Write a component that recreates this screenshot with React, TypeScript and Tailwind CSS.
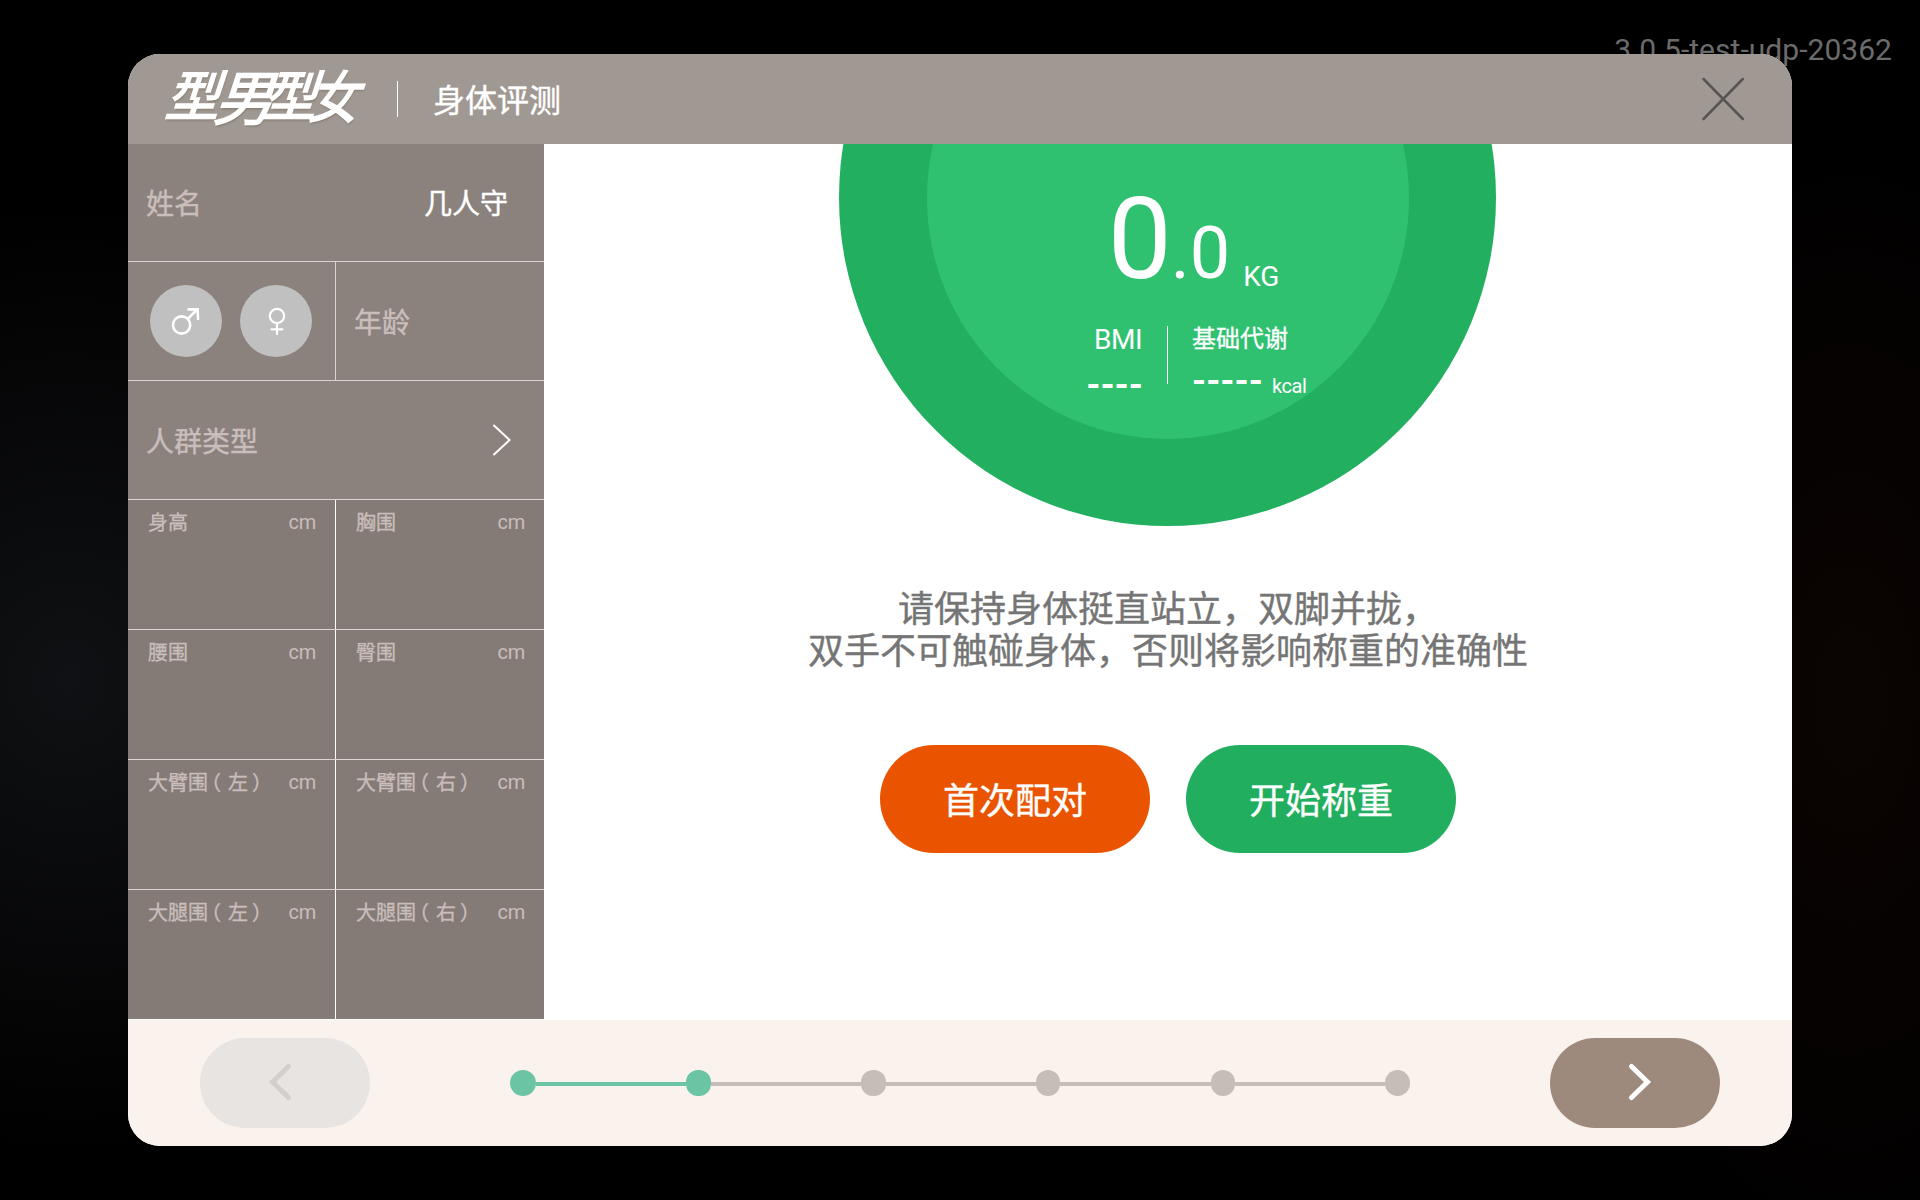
import React from "react";

const measurements: [string, string][] = [
  ["身高", "胸围"],
  ["腰围", "臀围"],
  ["大臂围（左）", "大臂围（右）"],
  ["大腿围（左）", "大腿围（右）"],
];

// Full-width brackets are set to half width and padded so they sit mid-cell.
function Label({ text }: { text: string }) {
  return (
    <span className="flex pt-px [-webkit-text-stroke:0.3px]">
      {text.split(/([（）])/).map((c, i) => (
        <span
          key={i}
          className={
            c === "（"
              ? "block w-5 pl-[3px] [font-feature-settings:'halt']"
              : c === "）"
                ? "block w-5 pl-1 [font-feature-settings:'halt']"
                : "block"
          }
        >
          {c}
        </span>
      ))}
    </span>
  );
}

function Cell({ text, first }: { text: string; first?: boolean }) {
  return (
    <div
      className={
        first
          ? "flex w-[208px] items-start justify-between border-r border-white pt-[7px] pr-[19px] pl-5"
          : "flex w-[208px] items-start justify-between pt-[7px] pr-[19px] pl-5"
      }
    >
      <Label text={text} />
      <span className="tracking-[-0.3px]">cm</span>
    </div>
  );
}

function Logo() {
  return (
    <div className="flex h-[60px] w-[202px] origin-bottom-left -skew-x-[18deg] items-start text-white [-webkit-text-stroke:1.7px_#fff] [text-shadow:1px_2px_2px_rgba(110,98,80,0.55)]">
      <span className="block w-[50px] pt-px text-[54px] leading-[55px]">型</span>
      <span className="block w-[47px] pt-px text-[59px] leading-[60px]">男</span>
      <span className="block w-[47px] pt-px text-[54px] leading-[55px]">型</span>
      <span className="block origin-left scale-x-[0.88] pt-[2px] text-[56px] leading-[56px]">女</span>
    </div>
  );
}

function Sidebar() {
  return (
    <aside className="flex w-[416px] flex-col bg-[#8b827d] text-[28px] leading-[40px] text-[#c9bebc]">
      <div className="flex h-[118px] items-center justify-between border-b border-[#d8d5d3] pt-1 pr-9 pl-[18px] [-webkit-text-stroke:0.4px]">
        <span>姓名</span>
        <span className="text-white">几人守</span>
      </div>
      <div className="flex h-[119px] border-b border-[#d8d5d3]">
        <div className="flex w-[208px] items-center gap-[18px] border-r border-[#d8d5d3] pl-[22px]">
          <div className="size-[72px] rounded-full bg-[#c0c0c0]">
            <svg width="72" height="72" viewBox="0 0 72 72" fill="none" stroke="#fff" strokeWidth="2.6" strokeLinecap="round">
              <circle cx="31.6" cy="40" r="8.6" />
              <path d="M37.9 33.7L47.5 24.3M38.6 24.4H47.6L48 34" />
            </svg>
          </div>
          <div className="size-[72px] rounded-full bg-[#c0c0c0]">
            <svg width="72" height="72" viewBox="0 0 72 72" fill="none" stroke="#fff" strokeWidth="2.2" strokeLinecap="round">
              <circle cx="37" cy="31" r="7.2" />
              <path d="M37 38.5V49M31.5 44.3H42.5" />
            </svg>
          </div>
        </div>
        <div className="flex items-center pt-[6px] pl-[18px] [-webkit-text-stroke:0.4px]">年龄</div>
      </div>
      <div className="flex h-[119px] items-center justify-between border-b border-[#d8d5d3] pr-8 pl-[18px]">
        <span className="pt-[6px] [-webkit-text-stroke:0.4px]">人群类型</span>
        <svg width="20" height="34" viewBox="0 0 20 34" fill="none" stroke="#fff" strokeWidth="2" strokeLinecap="round" strokeLinejoin="round">
          <path d="M2 2.5L17.6 17L2 31.5" />
        </svg>
      </div>
      <div className="flex flex-col bg-[#857b76] text-xl leading-[30px]">
        {measurements.map(([a, b], i) => (
          <div
            key={a}
            className={
              i === 3
                ? "flex h-[130px] border-b border-white"
                : "flex h-[130px] border-b border-[#d8d5d3]"
            }
          >
            <Cell text={a} first />
            <Cell text={b} />
          </div>
        ))}
      </div>
    </aside>
  );
}

function Dial() {
  return (
    <div className="flex h-[382px] w-full items-end justify-center overflow-hidden pr-px">
      <div className="flex size-[657px] shrink-0 items-center justify-center rounded-full bg-[#22b060]">
        <div className="flex size-[482px] flex-col items-center rounded-full bg-[#30c170] pt-[226px] text-white">
          <div className="flex h-[113px] items-baseline pl-[52px]">
            <span className="text-[114px] leading-[113px]">0</span>
            <span className="-ml-px text-[72px] leading-[72px]">.0</span>
            <span className="ml-[13px] translate-y-2 text-[28px] leading-8">KG</span>
          </div>
          <div className="mt-[29px] flex h-[72px] w-[482px]">
            <div className="flex w-[240.5px] flex-col items-end pr-6">
              <span className="-mt-px pr-px text-[28px] leading-8 tracking-[-0.5px]">BMI</span>
              <span className="mt-[9px] text-[36px] leading-[40px] font-bold">----</span>
            </div>
            <div className="mt-px h-[58px] w-px bg-white" />
            <div className="flex flex-col pl-6">
              <span className="text-2xl leading-7 [-webkit-text-stroke:0.3px]">基础代谢</span>
              <span className="mt-[8px] flex items-baseline">
                <span className="text-[36px] leading-[40px] font-bold">-----</span>
                <span className="ml-[9px] text-xl leading-6 tracking-[-0.4px]">kcal</span>
              </span>
            </div>
          </div>
        </div>
      </div>
    </div>
  );
}

const steps = [
  { line: "mt-[2px] h-1 w-[150px] bg-[#6bc4a4]", dot: "h-[26px] w-[25px] rounded-[12px] bg-[#6bc4a4]" },
  { line: "mt-[2px] h-1 w-[150px] bg-[#c6bdb8]", dot: "h-[26px] w-[25px] rounded-[12px] bg-[#c6bdb8]" },
  { line: "mt-[2px] h-1 w-[150px] bg-[#c6bdb8]", dot: "h-[26px] w-[24px] rounded-[12px] bg-[#c6bdb8]" },
  { line: "mt-[2px] h-1 w-[151px] bg-[#c6bdb8]", dot: "h-[26px] w-[24px] rounded-[12px] bg-[#c6bdb8]" },
  { line: "mt-[2px] h-1 w-[150px] bg-[#c6bdb8]", dot: "h-[26px] w-[25px] rounded-[12.5px] bg-[#c6bdb8]" },
];

function Steps() {
  return (
    <div className="flex items-center">
      <div className="size-[26px] rounded-full bg-[#6bc4a4]" />
      {steps.map((s, i) => (
        <React.Fragment key={i}>
          <div className={s.line} />
          <div className={s.dot} />
        </React.Fragment>
      ))}
    </div>
  );
}

export default function App() {
  return (
    <div className="relative h-[1200px] w-[1920px] overflow-hidden bg-black bg-[radial-gradient(ellipse_420px_480px_at_70px_680px,#101114,transparent),radial-gradient(ellipse_300px_600px_at_1850px_700px,#0b0402,transparent)] px-32 pt-[54px] font-['Roboto','Noto_Sans_CJK_SC',sans-serif]">
      <div className="absolute top-[32px] right-[28px] text-[30px] leading-[35px] tracking-[0.04px] whitespace-nowrap text-[#6b6b6b]">
        3.0.5-test-udp-20362
      </div>
      <div className="relative flex h-[1092px] w-[1664px] flex-col overflow-hidden rounded-[32px] bg-white">
        <header className="flex h-[90px] shrink-0 items-center bg-[#a09892] pl-[32px]">
          <Logo />
          <div className="ml-[35px] h-9 w-px bg-white" />
          <h1 className="ml-[35px] pt-[3px] text-[32px] leading-10 text-white [-webkit-text-stroke:0.4px]">身体评测</h1>
          <svg className="mr-[46px] ml-auto" width="46" height="46" viewBox="0 0 46 46" fill="none" stroke="#555" strokeWidth="2.5" strokeLinecap="round">
            <path d="M3.5 3L42.8 43M42.8 3L3.5 43" />
          </svg>
        </header>
        <div className="flex h-[876px]">
          <Sidebar />
          <main className="flex flex-1 flex-col items-center">
            <Dial />
            <p className="mt-[63px] text-center text-[36px] leading-[42px] text-[#757575] [-webkit-text-stroke:0.4px]">
              请保持身体挺直站立，双脚并拢，
              <br />
              双手不可触碰身体，否则将影响称重的准确性
            </p>
            <div className="mt-[72px] flex gap-9 text-[36px] text-white [-webkit-text-stroke:0.4px]">
              <button className="h-[108px] w-[270px] rounded-full bg-[#ea5400] pt-[6px]">首次配对</button>
              <button className="h-[108px] w-[270px] rounded-full bg-[#22ae5f] pt-[6px]">开始称重</button>
            </div>
          </main>
        </div>
        <footer className="flex h-[126px] items-center justify-between bg-[#faf2ec] px-[72px]">
          <button className="flex h-[90px] w-[170px] items-center justify-center rounded-full bg-[#e8e4e1]">
            <svg width="170" height="90" viewBox="0 0 170 90" fill="none" stroke="#d2cfcc" strokeWidth="5" strokeLinecap="round">
              <path d="M88.5 28.5L72.5 44L88.5 59.5" />
            </svg>
          </button>
          <Steps />
          <button className="flex h-[90px] w-[170px] items-center justify-center rounded-full bg-[#9d8a7d]">
            <svg width="170" height="90" viewBox="0 0 170 90" fill="none" stroke="#fff" strokeWidth="5" strokeLinecap="round">
              <path d="M81.5 28.5L97.5 44L81.5 59.5" />
            </svg>
          </button>
        </footer>
      </div>
    </div>
  );
}
